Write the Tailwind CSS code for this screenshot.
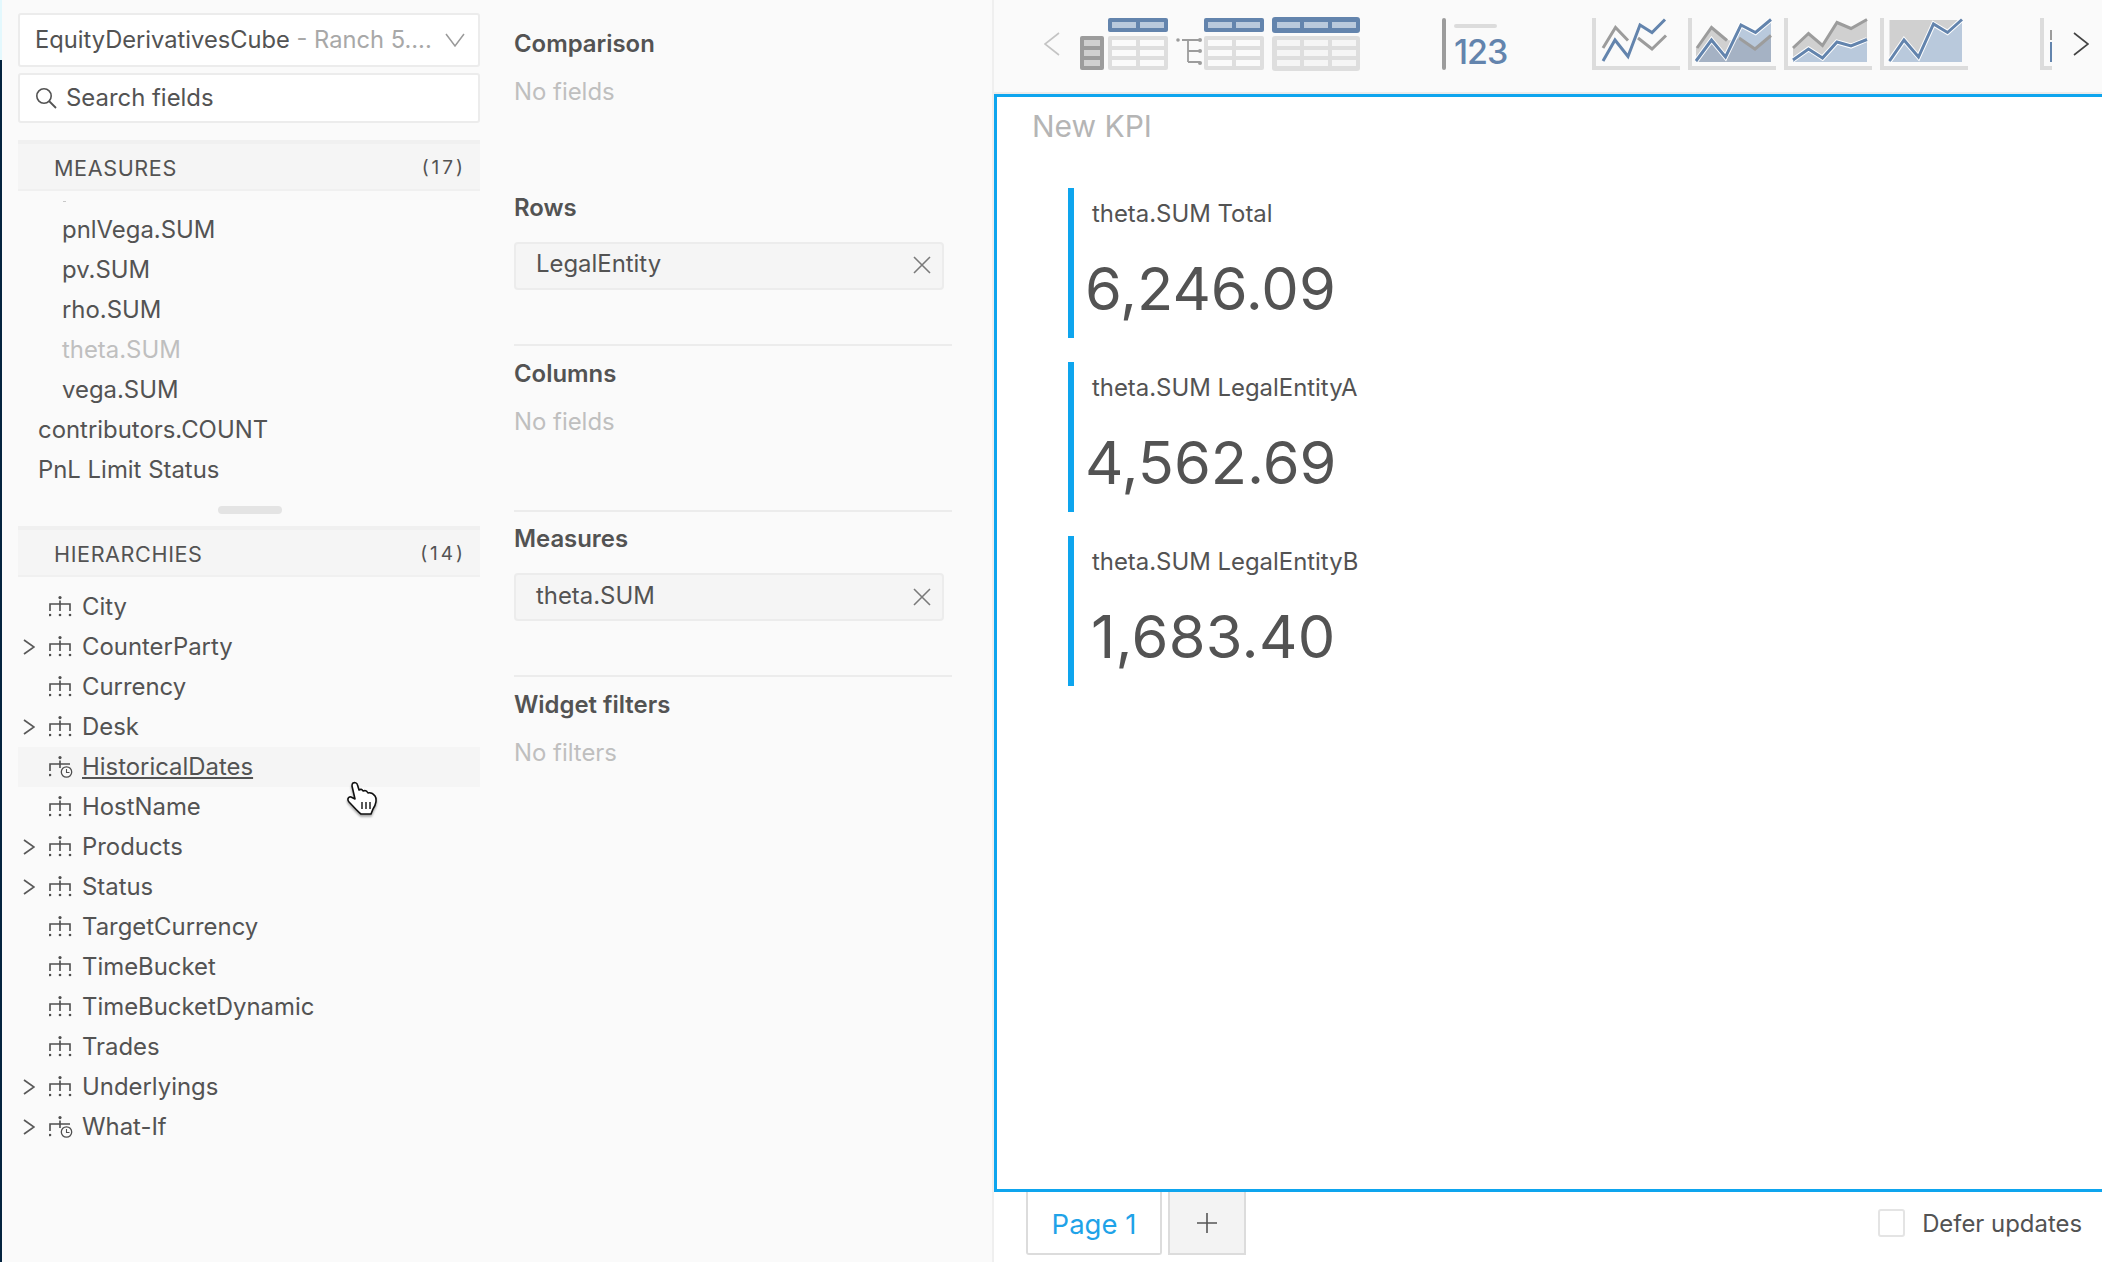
<!DOCTYPE html>
<html lang="en">
<head>
  <meta charset="UTF-8" />
  <title>New KPI</title>
  <script src="https://cdn.jsdelivr.net/npm/@tailwindcss/browser@4"></script>
</head>
<body class="bg-white">
  <svg class="hidden">
    <symbol id="hier" viewBox="0 0 24 22">
      <g fill="#4f4f4f">
        <circle cx="11" cy="1.6" r="1.6" /><circle cx="1" cy="19" r="1.3" /><circle cx="11" cy="19" r="1.3" /><circle cx="21" cy="19" r="1.3" />
      </g>
      <path d="M11 4.5V15M1 15V8H21V15" fill="none" stroke="#4f4f4f" stroke-width="1.6" />
    </symbol>
    <symbol id="hier-time" viewBox="0 0 24 22">
      <g fill="#4f4f4f">
        <circle cx="11" cy="1.6" r="1.6" /><circle cx="1" cy="19" r="1.3" />
      </g>
      <path d="M11 4.5V12M1 15V8H21" fill="none" stroke="#4f4f4f" stroke-width="1.6" />
      <circle cx="17.5" cy="16" r="5.2" fill="#fafafa" stroke="#4f4f4f" stroke-width="1.3" />
      <path d="M17.5 13V16.5H20.5" fill="none" stroke="#4f4f4f" stroke-width="1.1" />
    </symbol>
    <symbol id="chev" viewBox="0 0 12 16">
      <path d="M1 1L11 8L1 15" fill="none" stroke="#595959" stroke-width="1.7" />
    </symbol>
    <symbol id="grid2" viewBox="0 0 60 52">
      <rect y="0" width="60" height="14" rx="2" fill="#6384ad" />
      <rect x="4" y="4" width="24" height="6" fill="#b9c9dc" /><rect x="32" y="4" width="24" height="6" fill="#b9c9dc" />
      <rect y="18" width="60" height="34" rx="2" fill="#dedede" />
      <g fill="#fafafa">
        <rect x="4" y="22" width="24" height="6" /><rect x="32" y="22" width="24" height="6" />
        <rect x="4" y="32" width="24" height="6" /><rect x="32" y="32" width="24" height="6" />
        <rect x="4" y="42" width="24" height="6" /><rect x="32" y="42" width="24" height="6" />
      </g>
    </symbol>
    <symbol id="axis" viewBox="0 0 88 52">
      <path d="M2 0V50H88" fill="none" stroke="#dcdcdc" stroke-width="4" />
    </symbol>
  </svg>

  <div class="w-[2102px] h-[1262px] flex overflow-hidden font-['Inter',sans-serif] text-[#535353] text-[23.9px]">
    <!-- thin strip of the window behind -->
    <div class="w-[2px] h-full flex flex-col">
      <div class="h-[60px] bg-[#e3f8fd]"></div>
      <div class="flex-1 bg-[#04233f]"></div>
    </div>

    <!-- data model -->
    <div class="w-[512px] h-full bg-[#fafafa] pl-[16px] pt-[13px]">
      <div class="w-[462px]">
        <div class="h-[54px] bg-white border-2 border-[#ececec] rounded-[3px] flex items-center pl-[15px] pr-[13px] text-[23.7px]">
          <span class="flex-1 whitespace-nowrap">EquityDerivativesCube <span class="text-[#a8a8a8]">- Ranch 5....</span></span>
          <svg class="w-[20px] h-[14px]" viewBox="0 0 20 14"><path d="M1 1L10 13L19 1" fill="none" stroke="#9a9a9a" stroke-width="1.5" /></svg>
        </div>
        <div class="h-[50px] mt-[6px] bg-white border-2 border-[#ececec] rounded-[3px] flex items-center pl-[15px]">
          <svg class="w-[22px] h-[22px] mr-[9px]" viewBox="0 0 22 22"><circle cx="9" cy="9" r="7.2" fill="none" stroke="#535353" stroke-width="1.6" /><path d="M14 14L21 21" stroke="#535353" stroke-width="1.8" /></svg>
          <span>Search fields</span>
        </div>

        <div class="h-[51px] mt-[17px] bg-[#f5f5f5] border-t-4 border-t-[#f0f0f0] border-b-2 border-b-[#f0f0f0] flex items-center pl-[36px] pr-[14px]">
          <span class="flex-1 text-[21.6px] tracking-[0.6px] pt-[3px]">MEASURES</span>
          <span class="text-[19px] tracking-[3px] pt-[3px]">(17)</span>
        </div>
        <div class="relative mt-[18px]">
          <div class="absolute left-[45px] -top-[8px] w-[3px] h-[1px] bg-[#c8c8c8]"></div>
          <div class="h-10 flex items-center pt-[1px] pl-[44px]">pnlVega.SUM</div>
          <div class="h-10 flex items-center pt-[1px] pl-[44px]">pv.SUM</div>
          <div class="h-10 flex items-center pt-[1px] pl-[44px]">rho.SUM</div>
          <div class="h-10 flex items-center pt-[1px] pl-[44px] text-[#bfbfbf]">theta.SUM</div>
          <div class="h-10 flex items-center pt-[1px] pl-[44px]">vega.SUM</div>
          <div class="h-10 flex items-center pt-[1px] pl-[20px]">contributors.COUNT</div>
          <div class="h-10 flex items-center pt-[1px] pl-[20px]">PnL Limit Status</div>
        </div>
        <div class="w-[64px] h-[8px] mt-[17px] ml-[200px] rounded-full bg-[#e4e4e4]"></div>

        <div class="h-[51px] mt-[12px] bg-[#f5f5f5] border-t-4 border-t-[#f0f0f0] border-b-2 border-b-[#f0f0f0] flex items-center pl-[36px] pr-[14px]">
          <span class="flex-1 text-[21.6px] tracking-[0.6px] pt-[3px]">HIERARCHIES</span>
          <span class="text-[19px] tracking-[3px] pt-[3px]">(14)</span>
        </div>
        <div class="relative mt-[10px]">
          <div class="h-10 flex items-center pl-[31px]"><svg class="w-[24px] h-[22px] mr-[9px]"><use href="#hier" /></svg>City</div>
          <div class="h-10 flex items-center pl-[5px]"><svg class="w-[12px] h-[16px] mr-[14px]"><use href="#chev" /></svg><svg class="w-[24px] h-[22px] mr-[9px]"><use href="#hier" /></svg>CounterParty</div>
          <div class="h-10 flex items-center pl-[31px]"><svg class="w-[24px] h-[22px] mr-[9px]"><use href="#hier" /></svg>Currency</div>
          <div class="h-10 flex items-center pl-[5px]"><svg class="w-[12px] h-[16px] mr-[14px]"><use href="#chev" /></svg><svg class="w-[24px] h-[22px] mr-[9px]"><use href="#hier" /></svg>Desk</div>
          <div class="h-10 flex items-center pl-[31px] bg-[#f5f5f5]"><svg class="w-[24px] h-[22px] mr-[9px]"><use href="#hier-time" /></svg><span class="underline underline-offset-2">HistoricalDates</span></div>
          <div class="h-10 flex items-center pl-[31px]"><svg class="w-[24px] h-[22px] mr-[9px]"><use href="#hier" /></svg>HostName</div>
          <div class="h-10 flex items-center pl-[5px]"><svg class="w-[12px] h-[16px] mr-[14px]"><use href="#chev" /></svg><svg class="w-[24px] h-[22px] mr-[9px]"><use href="#hier" /></svg>Products</div>
          <div class="h-10 flex items-center pl-[5px]"><svg class="w-[12px] h-[16px] mr-[14px]"><use href="#chev" /></svg><svg class="w-[24px] h-[22px] mr-[9px]"><use href="#hier" /></svg>Status</div>
          <div class="h-10 flex items-center pl-[31px]"><svg class="w-[24px] h-[22px] mr-[9px]"><use href="#hier" /></svg>TargetCurrency</div>
          <div class="h-10 flex items-center pl-[31px]"><svg class="w-[24px] h-[22px] mr-[9px]"><use href="#hier" /></svg>TimeBucket</div>
          <div class="h-10 flex items-center pl-[31px]"><svg class="w-[24px] h-[22px] mr-[9px]"><use href="#hier" /></svg>TimeBucketDynamic</div>
          <div class="h-10 flex items-center pl-[31px]"><svg class="w-[24px] h-[22px] mr-[9px]"><use href="#hier" /></svg>Trades</div>
          <div class="h-10 flex items-center pl-[5px]"><svg class="w-[12px] h-[16px] mr-[14px]"><use href="#chev" /></svg><svg class="w-[24px] h-[22px] mr-[9px]"><use href="#hier" /></svg>Underlyings</div>
          <div class="h-10 flex items-center pl-[5px]"><svg class="w-[12px] h-[16px] mr-[14px]"><use href="#chev" /></svg><svg class="w-[24px] h-[22px] mr-[9px]"><use href="#hier-time" /></svg>What-If</div>

          <!-- mouse pointer -->
          <svg class="absolute left-[328px] top-[194px] w-[32px] h-[36px] drop-shadow-[0_2px_1px_rgba(0,0,0,0.35)]" viewBox="0 0 32 36">
            <path d="M7 2C9 1 11 2 11.5 4L13 9C14.5 8 16 8 17 10C19 9 21 10 22 12C24 11.5 27 12.5 29 15C31 18 30 24 27 28L25 33L15 33C12 31 8 26 3 21C1 19 2 15 5 16L9 18L6 5C6 3.5 6.3 2.5 7 2Z" fill="#fff" stroke="#111" stroke-width="1.6" stroke-linejoin="round" />
            <path d="M16 21V28M20 21V28M24 21V28" stroke="#111" stroke-width="1.4" />
          </svg>
        </div>
      </div>
    </div>

    <!-- wizard -->
    <div class="w-[478px] h-full bg-[#fafafa] pt-[28px]">
      <div class="w-[438px]">
        <div class="h-[164px]">
          <div class="h-8 flex items-center font-semibold">Comparison</div>
          <div class="h-8 mt-4 flex items-center text-[#bfbfbf]">No fields</div>
        </div>
        <div class="h-[154px] mb-[12px] border-b-2 border-[#ececec]">
          <div class="h-8 flex items-center font-semibold">Rows</div>
          <div class="w-[430px] h-[48px] mt-[18px] pl-[20px] pr-[11px] flex items-center justify-between bg-[#f5f5f5] border-2 border-[#ececec] rounded-[4px]">
            <span class="-mt-[4px]">LegalEntity</span>
            <svg class="w-[18px] h-[18px] -mt-[2px]" viewBox="0 0 18 18"><path d="M1 1L17 17M17 1L1 17" stroke="#7a7a7a" stroke-width="1.6" /></svg>
          </div>
        </div>
        <div class="h-[154px] mb-[12px] border-b-2 border-[#ececec]">
          <div class="h-8 flex items-center font-semibold">Columns</div>
          <div class="h-8 mt-4 flex items-center text-[#bfbfbf]">No fields</div>
        </div>
        <div class="h-[154px] mb-[12px] border-b-2 border-[#ececec]">
          <div class="h-8 -mt-[1px] mb-[1px] flex items-center font-semibold">Measures</div>
          <div class="w-[430px] h-[48px] mt-[18px] pl-[20px] pr-[11px] flex items-center justify-between bg-[#f5f5f5] border-2 border-[#ececec] rounded-[4px]">
            <span class="-mt-[3px]">theta.SUM</span>
            <svg class="w-[18px] h-[18px] -mt-[1px]" viewBox="0 0 18 18"><path d="M1 1L17 17M17 1L1 17" stroke="#7a7a7a" stroke-width="1.6" /></svg>
          </div>
        </div>
        <div>
          <div class="h-8 flex items-center font-semibold">Widget filters</div>
          <div class="h-8 mt-4 flex items-center text-[#bfbfbf]">No filters</div>
        </div>
      </div>
    </div>

    <!-- widget -->
    <div class="flex-1 min-w-0 h-full flex flex-col border-l-2 border-[#efefef]">
      <div class="h-[92px] bg-[#fafafa] pt-[18px] flex items-start pl-[50px]">
        <svg class="w-[16px] h-[24px] mt-[14px]" viewBox="0 0 16 24"><path d="M15 1L1 12L15 23" fill="none" stroke="#c4c4c4" stroke-width="1.6" /></svg>

        <!-- pivot tables -->
        <svg class="w-[88px] h-[52px] ml-[20px]" viewBox="0 0 88 52">
          <use href="#grid2" x="28" width="60" height="52" />
          <rect y="18" width="24" height="34" rx="2" fill="#9c9c9c" />
          <g fill="#d0d0d0"><rect x="4" y="22" width="16" height="6" /><rect x="4" y="32" width="16" height="6" /><rect x="4" y="42" width="16" height="6" /></g>
        </svg>
        <svg class="w-[88px] h-[52px] ml-[8px]" viewBox="0 0 88 52">
          <use href="#grid2" x="28" width="60" height="52" />
          <path d="M6 22H24M12 22V44M12 33H24M12 44H24" fill="none" stroke="#9c9c9c" stroke-width="1.8" />
          <g fill="#9c9c9c"><circle cx="2" cy="22" r="1.8" /><circle cx="24" cy="22" r="2" /><circle cx="24" cy="33" r="2" /><circle cx="24" cy="45" r="2" /></g>
        </svg>
        <svg class="w-[88px] h-[54px] ml-[8px] -mt-[1px]" viewBox="0 0 88 54">
          <rect y="0" width="88" height="16" rx="3" fill="#6384ad" />
          <g fill="#b9c9dc"><rect x="5" y="5" width="23" height="6" /><rect x="32" y="5" width="24" height="6" /><rect x="60" y="5" width="24" height="6" /></g>
          <rect y="19" width="88" height="35" rx="3" fill="#dedede" />
          <g fill="#f5f5f5">
            <rect x="5" y="23" width="23" height="6" /><rect x="32" y="23" width="24" height="6" /><rect x="60" y="23" width="24" height="6" />
            <rect x="5" y="33" width="23" height="6" /><rect x="32" y="33" width="24" height="6" /><rect x="60" y="33" width="24" height="6" />
            <rect x="5" y="43" width="23" height="6" /><rect x="32" y="43" width="24" height="6" /><rect x="60" y="43" width="24" height="6" />
          </g>
        </svg>

        <!-- kpi -->
        <div class="w-[66px] h-[52px] ml-[82px] flex">
          <div class="w-[4px] h-full rounded-[2px] bg-[#9c9c9c]"></div>
          <div class="ml-[8px] flex flex-col">
            <div class="w-[43px] h-[4px] mt-[6px] rounded-[2px] bg-[#dcdcdc]"></div>
            <div class="text-[34px] leading-[34px] mt-[7px] font-medium text-[#6384ad] tracking-[-1px]">123</div>
          </div>
        </div>

        <!-- line charts -->
        <svg class="w-[88px] h-[52px] ml-[84px]" viewBox="0 0 88 52">
          <use href="#axis" width="88" height="52" />
          <path d="M11 30L23.5 9.5L36 22.5M46 20L60 31L74 17.5" fill="none" stroke="#9c9c9c" stroke-width="3" />
          <path d="M11 43L23 22L36 38.5L48 7L60 14.5L73 1.5" fill="none" stroke="#6384ad" stroke-width="3" />
        </svg>
        <svg class="w-[88px] h-[52px] ml-[8px]" viewBox="0 0 88 52">
          <use href="#axis" width="88" height="52" />
          <path d="M8 30L23.5 9.5L41 22.5L51 20L67 31L83 17.5V44H8Z" fill="#d0d0d0" />
          <path d="M8 43L23.5 22L37.5 39L53 7L67.5 14.5L83 1.5V44H8Z" fill="#b9c9dc" />
          <path d="M8 43L23.5 22L37.5 39L48 20L67 31L83 17.5V44H8Z" fill="#a5b2c4" />
          <path d="M9 30L23.5 9.5L39 22.5M51 20L67 31L83 17.5" fill="none" stroke="#9c9c9c" stroke-width="3" />
          <path d="M8 43L23.5 22L37.5 39L53 7L67.5 14.5L83 1.5" fill="none" stroke="#fff" stroke-width="5" />
          <path d="M8 43L23.5 22L37.5 39L53 7L67.5 14.5L83 1.5" fill="none" stroke="#6384ad" stroke-width="3" />
        </svg>
        <svg class="w-[88px] h-[52px] ml-[8px]" viewBox="0 0 88 52">
          <use href="#axis" width="88" height="52" />
          <path d="M9 30L24.5 15.5L38.5 27.5L53 4.5L67 10.5L83 1.5V24L67 28L53 24L38.5 40L24.5 31L9 42Z" fill="#d0d0d0" />
          <path d="M9 42L24.5 31L38.5 40L53 24L67 28L83 21.5V44H9Z" fill="#b9c9dc" />
          <path d="M9 30L24.5 15.5L38.5 27.5L53 4.5L67 10.5L83 1.5" fill="none" stroke="#9c9c9c" stroke-width="3" />
          <path d="M9 42L24.5 31L38.5 40L53 24L67 28L83 21.5" fill="none" stroke="#fff" stroke-width="5" />
          <path d="M9 42L24.5 31L38.5 40L53 24L67 28L83 21.5" fill="none" stroke="#6384ad" stroke-width="3" />
        </svg>
        <svg class="w-[88px] h-[52px] ml-[8px]" viewBox="0 0 88 52">
          <use href="#axis" width="88" height="52" />
          <rect x="9.5" y="2" width="72" height="42" fill="#d0d0d0" />
          <path d="M9.5 43L24 22L38.5 39L53.5 6L67.5 14.5L82 1.5V44H9.5Z" fill="#b9c9dc" />
          <path d="M9.5 43L24 22L38.5 39L53.5 6L67.5 14.5L82 1.5" fill="none" stroke="#fff" stroke-width="5" />
          <path d="M9.5 43L24 22L38.5 39L53.5 6L67.5 14.5L82 1.5" fill="none" stroke="#6384ad" stroke-width="3" />
        </svg>
        <svg class="w-[12px] h-[52px] ml-[72px]" viewBox="0 0 12 52">
          <path d="M2 0V50H12" fill="none" stroke="#dcdcdc" stroke-width="4" />
          <rect x="10" y="12" width="2" height="10" fill="#9c9c9c" />
          <rect x="10" y="24" width="2" height="20" fill="#6384ad" />
        </svg>
        <svg class="w-[16px] h-[24px] ml-[21px] mt-[14px]" viewBox="0 0 16 24"><path d="M1 1L15 12L1 23" fill="none" stroke="#444" stroke-width="1.6" /></svg>
      </div>

      <div class="h-[2px] bg-[#ececec]"></div>
      <div class="h-[1098px] bg-white border-y-[3px] border-l-[3px] border-[#0ea5ee] pt-[11px] pl-[35px]">
        <div class="text-[30px] leading-[36px] text-[#b5b5b5]">New KPI</div>
        <div class="mt-[44px] ml-[36px] flex flex-col gap-[24px]">
          <div class="h-[150px] border-l-[6px] border-[#0ea5ee] pl-[18px]">
            <div class="h-[50px] flex items-center pt-[1px]">theta.SUM Total</div>
            <div class="text-[59.5px] leading-[72px] mt-[14px] -ml-[7px]">6,246.09</div>
          </div>
          <div class="h-[150px] border-l-[6px] border-[#0ea5ee] pl-[18px]">
            <div class="h-[50px] flex items-center pt-[1px]">theta.SUM LegalEntityA</div>
            <div class="text-[59.5px] leading-[72px] mt-[14px] -ml-[7px]">4,562.69</div>
          </div>
          <div class="h-[150px] border-l-[6px] border-[#0ea5ee] pl-[18px]">
            <div class="h-[50px] flex items-center pt-[1px]">theta.SUM LegalEntityB</div>
            <div class="text-[59.5px] leading-[72px] mt-[14px] -ml-[1px] tracking-[0.3px]">1,683.40</div>
          </div>
        </div>
      </div>

      <div class="flex-1 bg-white flex items-start pl-[32px] pr-[20px]">
        <div class="w-[136px] h-[63px] pt-[4px] bg-white border-x-2 border-b-2 border-[#dcdcdc] rounded-b-[3px] flex items-center justify-center text-[#1fa3e8] text-[27.5px]">Page 1</div>
        <div class="w-[78px] h-[63px] ml-[6px] bg-[#f3f3f3] border-x-2 border-b-2 border-[#dcdcdc] flex items-center justify-center">
          <svg class="w-[20px] h-[20px]" viewBox="0 0 20 20"><path d="M10 0V20M0 10H20" stroke="#555" stroke-width="1.6" /></svg>
        </div>
        <div class="ml-auto mt-[18px] flex items-center h-[28px]">
          <div class="w-[27px] h-[28px] -mt-[2px] bg-white border-2 border-[#e4e4e4] rounded-[3px] mr-[17px]"></div>
          <span>Defer updates</span>
        </div>
      </div>
    </div>
  </div>
</body>
</html>
